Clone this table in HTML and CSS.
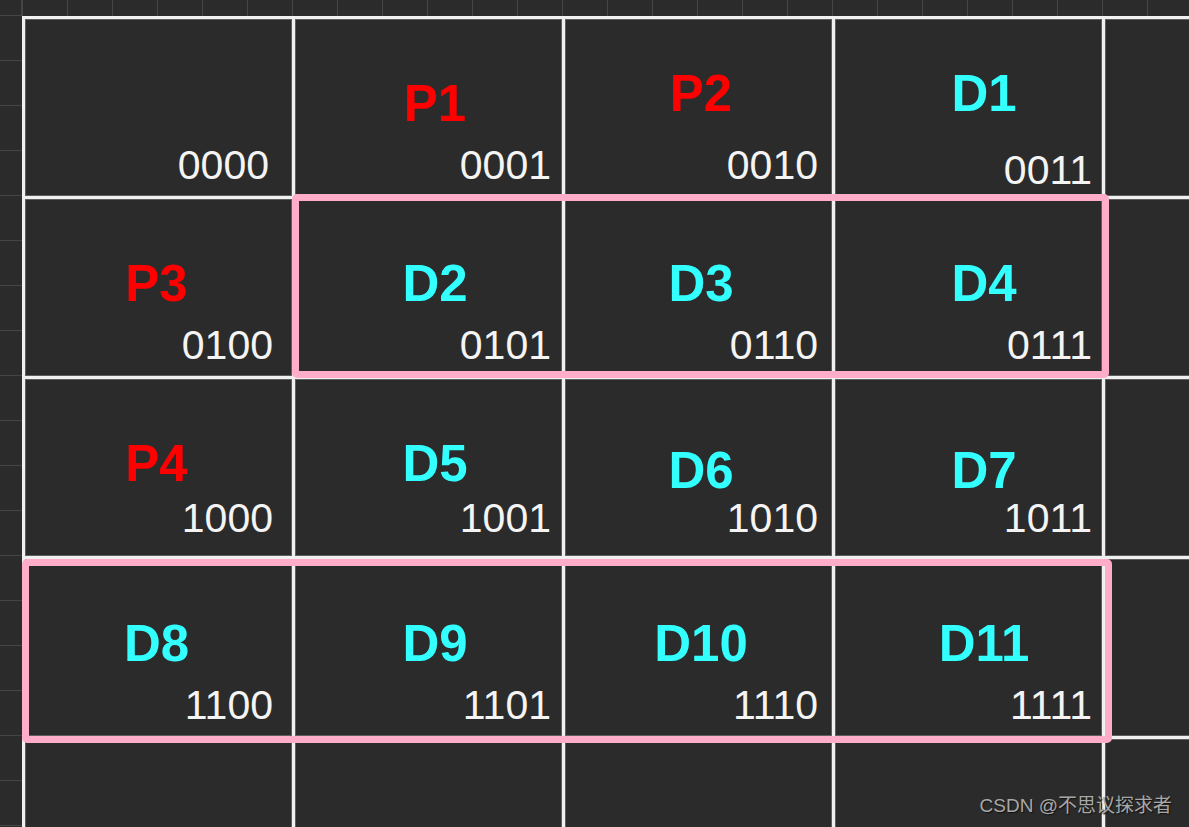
FILE: index.html
```html
<!DOCTYPE html>
<html lang="zh">
<head>
<meta charset="utf-8">
<title>Hamming grid</title>
<link rel="stylesheet" href="styles.css">
</head>
<body>
<div class="sheet">
  <div class="corner"></div>
  <div class="colhead"></div>
  <div class="rowhead"></div>
  <div class="board">
    <div class="cell c1"><div class="label">&nbsp;</div><div class="num in">0000</div></div>
    <div class="cell c2"><div class="label red">P1</div><div class="num">0001</div></div>
    <div class="cell c3"><div class="label red up">P2</div><div class="num">0010</div></div>
    <div class="cell c4"><div class="label cyan up">D1</div><div class="num lo">0011</div></div>
    <div class="cell"></div>

    <div class="cell c1"><div class="label red">P3</div><div class="num">0100</div></div>
    <div class="cell c2"><div class="label cyan">D2</div><div class="num">0101</div></div>
    <div class="cell c3"><div class="label cyan">D3</div><div class="num">0110</div></div>
    <div class="cell c4"><div class="label cyan">D4</div><div class="num">0111</div></div>
    <div class="cell"></div>

    <div class="cell c1"><div class="label red">P4</div><div class="num hi">1000</div></div>
    <div class="cell c2"><div class="label cyan">D5</div><div class="num hi">1001</div></div>
    <div class="cell c3"><div class="label cyan down">D6</div><div class="num hi">1010</div></div>
    <div class="cell c4"><div class="label cyan down">D7</div><div class="num hi">1011</div></div>
    <div class="cell"></div>

    <div class="cell c1"><div class="label cyan">D8</div><div class="num">1100</div></div>
    <div class="cell c2"><div class="label cyan">D9</div><div class="num">1101</div></div>
    <div class="cell c3"><div class="label cyan">D10</div><div class="num">1110</div></div>
    <div class="cell c4"><div class="label cyan">D11</div><div class="num">1111</div></div>
    <div class="cell"></div>

    <div class="cell"></div>
    <div class="cell"></div>
    <div class="cell"></div>
    <div class="cell"></div>
    <div class="cell"></div>

    <div class="hl hl-a"></div>
    <div class="hl hl-b"></div>
  </div>
</div>
<div class="watermark">CSDN @不思议探求者</div>
</body>
</html>
```
FILE: styles.css
```css
html, body {
  margin: 0;
  padding: 0;
}
body {
  width: 1189px;
  height: 827px;
  overflow: hidden;
  background: #2b2b2b;
  font-family: "Liberation Sans", Arial, sans-serif;
  position: relative;
}
.sheet {
  display: grid;
  grid-template-columns: 22px minmax(0, 1fr);
  grid-template-rows: 16px minmax(0, 1fr);
  width: 1189px;
  height: 827px;
}
.corner {
  box-sizing: border-box;
  border-right: 1px solid #454545;
  border-bottom: 1px solid #454545;
}
.colhead {
  background: repeating-linear-gradient(to right, #454545 0 1px, #2b2b2b 1px 45px);
}
.rowhead {
  background: repeating-linear-gradient(to bottom, #2b2b2b 0 44px, #454545 44px 45px);
}
.board {
  position: relative;
  overflow: hidden;
  display: grid;
  grid-template-columns: repeat(5, 267px);
  grid-template-rows: repeat(5, 177px);
  gap: 3px;
  padding: 3px 0 0 3px;
  background: #f0f0f0;
}
.cell {
  background: #2b2b2b;
  border: 1px solid #5e5e5e;
  display: flex;
  flex-direction: column;
  min-width: 0;
}
.label {
  margin-top: 58px;
  height: 51px;
  font-size: 51px;
  line-height: 51px;
  font-weight: 700;
  text-align: center;
  white-space: nowrap;
}
.label.up { margin-top: 48px; }
.label.down { margin-top: 65px; }
.red { color: #ff0000; }
.cyan { color: #33ffff; }
.num {
  margin-top: auto;
  font-size: 41px;
  line-height: 41px;
  text-align: right;
  color: #f4f4f4;
  padding-bottom: 9px;
  white-space: nowrap;
}
.num.hi { padding-bottom: 16px; }
.num.lo { padding-bottom: 4px; }

.c1 .label { padding-right: 4px; }
.c1 .num { padding-right: 18px; }
.c1 .num.in { padding-right: 22px; }
.c2 .label { padding-left: 13px; }
.c2 .num { padding-right: 10px; }
.c3 .label { padding-left: 5px; }
.c3 .num { padding-right: 13px; }
.c4 .label { padding-left: 31px; }
.c4 .num { padding-right: 9px; }

.hl {
  position: absolute;
  box-sizing: border-box;
  border: 7px solid #ffadc8;
  border-radius: 5px;
}
.hl-a {
  left: 270px;
  top: 178px;
  width: 817px;
  height: 184px;
}
.hl-b {
  left: 0;
  top: 543px;
  width: 1090px;
  height: 184px;
}
.watermark {
  position: absolute;
  right: 17px;
  bottom: 12px;
  font-family: "Liberation Sans", "Noto Sans CJK SC", sans-serif;
  font-size: 19px;
  line-height: 19px;
  color: #a8a8a8;
  text-shadow: 1px 1px 1px #111;
  white-space: nowrap;
}
```
